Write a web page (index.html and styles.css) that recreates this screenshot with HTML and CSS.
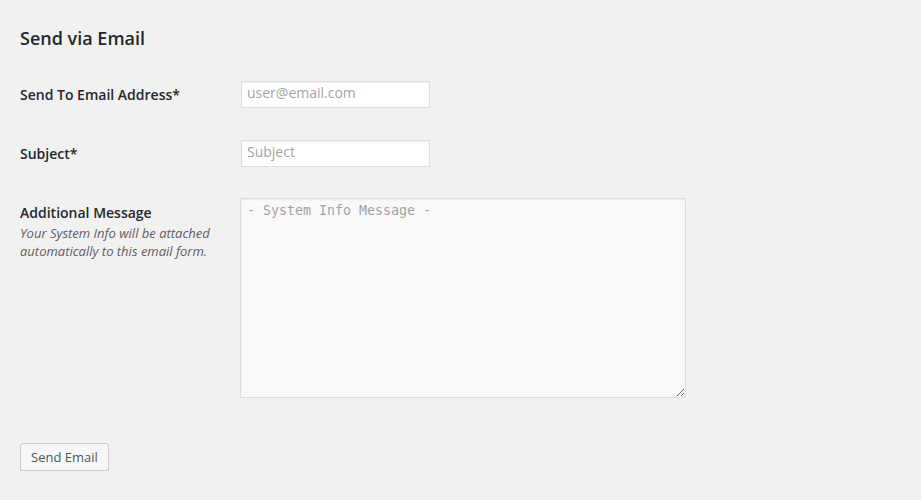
FILE: index.html
```html
<!DOCTYPE html>
<html lang="en">
<head>
<meta charset="utf-8">
<title>Send via Email</title>
<link rel="stylesheet" href="styles.css">
</head>
<body>
<div class="wrap">
  <h3 class="title">Send via Email</h3>
  <form class="form">
    <div class="row">
      <label class="label" for="email">Send To Email Address*</label>
      <input class="field" id="email" type="email" placeholder="user@email.com">
    </div>
    <div class="row">
      <label class="label" for="subject">Subject*</label>
      <input class="field" id="subject" type="text" placeholder="Subject">
    </div>
    <div class="row">
      <div class="label-col">
        <label class="label" for="message">Additional Message</label>
        <p class="description">Your System Info will be attached automatically to this email form.</p>
      </div>
      <textarea class="message" id="message" placeholder="- System Info Message -"></textarea>
    </div>
    <div class="actions">
      <button class="button" type="button">Send Email</button>
    </div>
  </form>
</div>
</body>
</html>
```

FILE: styles.css
```css
html, body {
  margin: 0;
  padding: 0;
  background: #f1f1f1;
}

body {
  font-family: "Open Sans", "Liberation Sans", sans-serif;
  color: #23282d;
  font-size: 14px;
}

.wrap {
  padding: 26px 20px 0 20px;
}

.title {
  margin: 0;
  font-size: 18px;
  line-height: 24px;
  font-weight: 600;
  color: #23282d;
}

.form {
  margin-top: 30px;
  display: flex;
  flex-direction: column;
  gap: 30px;
}

.row {
  display: flex;
  align-items: flex-start;
}

.row > .label,
.label-col {
  width: 220px;
  flex: none;
  padding-top: 5px;
}

.label {
  display: block;
  font-size: 14px;
  line-height: 20px;
  font-weight: 600;
  color: #23282d;
}

.description {
  margin: 1px 0 0 0;
  font-size: 13px;
  line-height: 18px;
  font-style: italic;
  color: #5e5e5e;
  width: 200px;
}

.field {
  margin: 1px;
  box-sizing: border-box;
  width: 189px;
  height: 27px;
  padding: 0 5px 4px 5px;
  border: 1px solid #ddd;
  background: #fff;
  box-shadow: inset 0 1px 2px rgba(0, 0, 0, 0.07);
  font-family: "Open Sans", "Liberation Sans", sans-serif;
  font-size: 14px;
  line-height: 15px;
  color: #32373c;
  border-radius: 0;
  outline: none;
}

.field::placeholder {
  color: #a4a4a4;
}

.message {
  margin: 0;
  box-sizing: border-box;
  width: 446px;
  height: 200px;
  padding: 2px 6px;
  border: 1px solid #ddd;
  background: #f9f9f9;
  box-shadow: inset 0 1px 2px rgba(0, 0, 0, 0.07);
  font-family: "DejaVu Sans Mono", "Liberation Mono", monospace;
  font-size: 13.3px;
  line-height: 20px;
  color: #333;
  border-radius: 0;
  outline: none;
}

.message::placeholder {
  color: #a4a4a4;
}

.actions {
  margin-top: 15px;
}

.button {
  box-sizing: border-box;
  height: 28px;
  margin: 0;
  padding: 0 10px;
  border: 1px solid #ccc;
  border-radius: 3px;
  background: #f7f7f7;
  box-shadow: 0 1px 0 #ccc;
  font-family: "Open Sans", "Liberation Sans", sans-serif;
  font-size: 13px;
  line-height: 26px;
  color: #555;
  cursor: pointer;
}
```
